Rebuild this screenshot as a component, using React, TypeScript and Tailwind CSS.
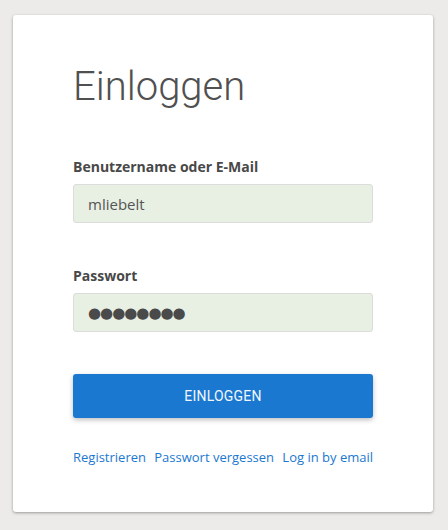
export default function App() {
  return (
    <div className="min-h-screen bg-[#ecebe9] pt-[15px] pl-[13px]">
      <div className="w-[420px] h-[497px] bg-white rounded-[3px] shadow-[0_1px_3px_rgba(0,0,0,0.35)] px-[60px] pt-[44px]">
        <h1 className="font-['Roboto',sans-serif] font-light text-[40px] leading-[56px] text-[#505050]">
          Einloggen
        </h1>

        <form className="mt-[42px]">
          <label className="block font-['Open_Sans',sans-serif] font-bold text-[14px] leading-[20px] text-[#484848]">
            Benutzername oder E-Mail
          </label>
          <input
            type="text"
            defaultValue="mliebelt"
            className="mt-[7px] block w-full h-[39px] px-[14px] rounded-[3px] border border-[#dcdcdc] bg-[#e8efe3] font-['Open_Sans',sans-serif] text-[15px] text-[#555] outline-none"
          />

          <label className="mt-[43px] block font-['Open_Sans',sans-serif] font-bold text-[14px] leading-[20px] text-[#484848]">
            Passwort
          </label>
          <input
            type="text"
            readOnly
            value="●●●●●●●●"
            className="mt-[7px] block w-full h-[39px] px-[14px] rounded-[3px] border border-[#dcdcdc] bg-[#e8efe3] font-['DejaVu_Sans',sans-serif] text-[15px] tracking-[-1px] text-[#4a4a4a] outline-none"
          />

          <button
            type="button"
            className="mt-[42px] block w-full h-[44px] rounded-[3px] bg-[#1b78d0] text-[#f2f7fd] font-['Roboto',sans-serif] text-[14px] tracking-[0.2px] shadow-[0_2px_5px_rgba(0,0,0,0.25)]"
          >
            EINLOGGEN
          </button>
        </form>

        <div className="mt-[30px] flex justify-between font-['Open_Sans',sans-serif] text-[13px] text-[#1b78d0]">
          <a href="#">Registrieren</a>
          <a href="#">Passwort vergessen</a>
          <a href="#">Log in by email</a>
        </div>
      </div>
    </div>
  );
}
